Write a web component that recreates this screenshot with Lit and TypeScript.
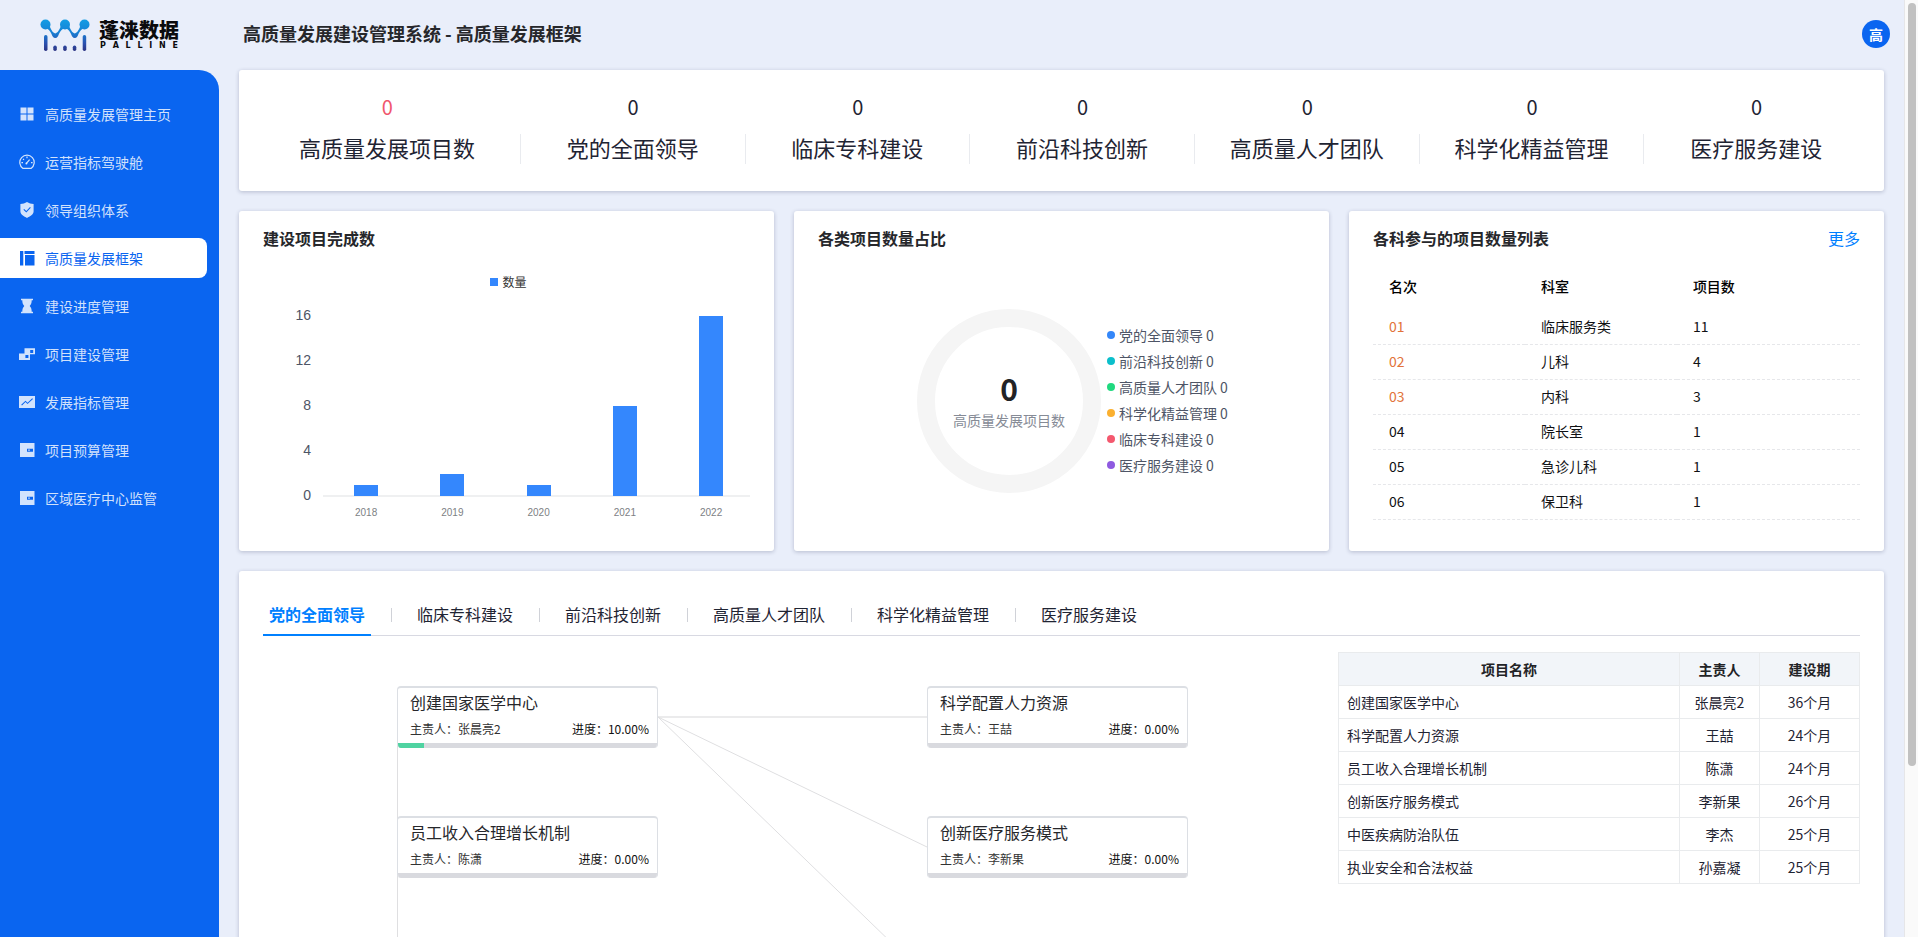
import { LitElement, html, css, svg } from "lit";
import { customElement, property, state } from "lit/decorators.js";
import { classMap } from "lit/directives/class-map.js";
import { styleMap } from "lit/directives/style-map.js";

const CATEGORIES = ["党的全面领导", "临床专科建设", "前沿科技创新", "高质量人才团队", "科学化精益管理", "医疗服务建设"];

const ICONS: Record<string, unknown> = {
  grid: svg`<path fill="currentColor" d="M1.5 1.5h6v6h-6zM8.5 1.5h6v6h-6zM1.5 8.5h6v6h-6zM8.5 8.5h6v6h-6z"/>`,
  gauge: svg`<path fill="none" stroke="currentColor" stroke-width="1.2" d="M4 14.4A7.2 7.2 0 1 1 12 14.4Z"/>
    <path fill="none" stroke="currentColor" stroke-width="1.2" d="M7.4 9.4 10.6 5.6M8 2.6v1.6M2.4 8.6h1.6M12 8.6h1.6M4 4.8l1 1"/>
    <circle cx="7.4" cy="9.4" r="1" fill="currentColor"/>`,
  shield: svg`<path fill="currentColor" fill-rule="evenodd" d="M8 0c2 1.300 4 1.900 6.600 2v7.500c0 3-3.600 4.700-6.600 6.500-3-1.800-6.600-3.500-6.600-6.500V2C4 1.900 6 1.300 8 0zM5.200 6.900 4.400 7.700 7.300 10.500 11.800 5.700 11 5 7.300 8.900z"/>`,
  frame: svg`<path fill="currentColor" d="M1 1h3.300v14.500H1zM5.500 1H15.500v3H5.500zM6 5h9.500v10.500H6z"/>`,
  hourglass: svg`<path fill="currentColor" d="M2 .7h12v1.600h-1.300c0 2.500-.5 4.200-2 5.700 1.500 1.500 2 3.200 2 5.700H14v1.600H2v-1.600h1.300c0-2.500.5-4.200 2-5.700-1.500-1.500-2-3.200-2-5.700H2z"/>`,
  blocks: svg`<path fill="currentColor" fill-rule="evenodd" d="M5.500 2.300H16V8.300H11V14H0V7.600h5.500zM11.200 4v3h3V4zM6.400 9v3h3V9z"/>`,
  trend: svg`<path fill="currentColor" fill-rule="evenodd" d="M0 2h16v12H0zM2.200 10.700l.8.800L6.500 8l2 2L14 4.900 13.200 4.200 8.600 8.700 6.500 6.700z"/>`,
  wallet: svg`<path fill="currentColor" fill-rule="evenodd" d="M1 1h14.500v14H1zM8 6.700v3h6v-3z"/><path fill="currentColor" d="M9.200 7.600h1.600v1.200H9.200z"/>`,
};

const MENU = [
  { icon: "grid", label: "高质量发展管理主页" },
  { icon: "gauge", label: "运营指标驾驶舱" },
  { icon: "shield", label: "领导组织体系" },
  { icon: "frame", label: "高质量发展框架", active: true },
  { icon: "hourglass", label: "建设进度管理" },
  { icon: "blocks", label: "项目建设管理" },
  { icon: "trend", label: "发展指标管理" },
  { icon: "wallet", label: "项目预算管理" },
  { icon: "wallet", label: "区域医疗中心监管" },
];

@customElement("side-menu")
class SideMenu extends LitElement {
  static styles = css`
    :host { display: flex; flex-direction: column; }
    .brand { display: flex; align-items: center; gap: 9px; height: 70px; padding: 0 0 6px 40px; box-sizing: border-box; }
    .mark { width: 50px; height: 34px; flex: none; margin-top: 6px; }
    .words { display: flex; flex-direction: column; width: 80px; margin-top: 5px; }
    .name { font-size: 20px; line-height: 22px; font-weight: 900; color: #0b0b0d; white-space: nowrap; }
    .latin { display: flex; justify-content: space-between; font: 700 8px/10px "DejaVu Sans", sans-serif; color: #0b0b0d; padding: 0 1px; }
    .menu { flex: 1; display: flex; flex-direction: column; gap: 8px; padding: 24px 12px 0 0; background: #0a65f0; border-radius: 0 20px 0 0; }
    .item { display: flex; align-items: center; gap: 10px; height: 40px; padding-left: 19px; border-radius: 0 8px 8px 0; color: rgba(255, 255, 255, 0.82); text-decoration: none; font-size: 14px; }
    .item.active { background: #fff; color: #0a65f0; }
    .icon { width: 16px; height: 16px; flex: none; }
  `;

  render() {
    return html`
      <div class="brand">
        <svg class="mark" viewBox="0 0 50 34" aria-hidden="true">
          <defs>
            <linearGradient id="g" gradientUnits="userSpaceOnUse" x1="0" y1="0" x2="0" y2="34">
              <stop offset="0" stop-color="#12a0e6" />
              <stop offset="0.4" stop-color="#1683d6" />
              <stop offset="0.75" stop-color="#2a4fae" />
              <stop offset="1" stop-color="#2c2f7c" />
            </linearGradient>
          </defs>
          <g fill="url(#g)">
            <circle cx="5.500" cy="6.500" r="5" />
            <circle cx="25" cy="6.500" r="5" />
            <circle cx="44.500" cy="6.500" r="5" />
            <path d="M7 10.500C10 12 11 15 12.500 18.200Q15.300 22 18 18.200C19.500 15 20.500 12 23.500 10.500L21 8C18.500 13 18 14.500 15.300 15.500 12.500 14.500 12 13 9.500 8z" />
            <path d="M26.500 10.500C29.500 12 30.500 15 32 18.200Q34.800 22 37.500 18.200C39 15 40 12 43 10.500L40.500 8C38 13 37.500 14.500 34.800 15.500 32 14.500 31.500 13 29 8z" />
            <rect x="4" y="17" width="3.500" height="16" rx="1.700" />
            <rect x="13.300" y="27.500" width="3.500" height="5.500" rx="1.700" />
            <rect x="23.200" y="27.500" width="3.500" height="5.500" rx="1.700" />
            <rect x="32.800" y="27.500" width="3.500" height="5.500" rx="1.700" />
            <rect x="42.700" y="17" width="3.500" height="16" rx="1.700" />
          </g>
        </svg>
        <div class="words">
          <span class="name">蓬涞数据</span>
          <span class="latin">${[..."PALLINE"].map((c) => html`<span>${c}</span>`)}</span>
        </div>
      </div>
      <nav class="menu" aria-label="主菜单">
        ${MENU.map(
          (m) => html`<a class=${classMap({ item: true, active: !!m.active })} href="#">
            <svg class="icon" viewBox="0 0 16 16" aria-hidden="true">${ICONS[m.icon]}</svg>
            <span>${m.label}</span>
          </a>`
        )}
      </nav>
    `;
  }
}

@customElement("stat-strip")
class StatStrip extends LitElement {
  static styles = css`
    :host { display: grid; grid-template-columns: 19fr repeat(6, 16fr); padding: 23px 15px 27px; color: #1f2433; text-align: center; }
    .stat { display: flex; flex-direction: column; gap: 13px; }
    .value { font-size: 20px; line-height: 28px; }
    .label { font-size: 22px; line-height: 26px; padding-bottom: 4px; border-right: 1px solid #e9ebef; white-space: nowrap; }
    .stat:first-child .value { color: #f0566d; }
    .stat:last-child .label { border-right-color: transparent; }
  `;

  render() {
    return ["高质量发展项目数", ...CATEGORIES].map(
      (label) => html`<div class="stat"><span class="value">0</span><span class="label">${label}</span></div>`
    );
  }
}

@customElement("bar-chart")
class BarChart extends LitElement {
  static styles = css`
    :host { display: block; margin-top: 22px; }
    .legend { display: flex; align-items: center; justify-content: center; gap: 4px; padding-left: 4px; font-size: 12px; line-height: 18px; color: #333; }
    .swatch { width: 8px; height: 8px; background: #3487fd; }
    .chart { display: grid; grid-template-columns: 48px minmax(0, 1fr); column-gap: 12px; margin-top: 14px; font-family: "Liberation Sans", Arial, sans-serif; }
    .scale { display: flex; flex-direction: column; justify-content: space-between; height: 200px; text-align: right; font-size: 14px; line-height: 20px; color: #4e5566; }
    .plot, .years { display: grid; grid-template-columns: repeat(5, 20.2%); }
    .plot { height: 180px; margin-top: 10px; border-bottom: 2px solid #eff0f1; }
    .slot { display: flex; align-items: flex-end; justify-content: center; }
    .bar { width: 24px; background: #3487fd; margin-bottom: -1px; }
    .years { grid-column: 2; text-align: center; font-size: 10px; line-height: 16px; color: #7d7f84; }
  `;

  private data = [
    { year: 2018, n: 1 },
    { year: 2019, n: 2 },
    { year: 2020, n: 1 },
    { year: 2021, n: 8 },
    { year: 2022, n: 16 },
  ];

  render() {
    return html`
      <div class="legend"><span class="swatch"></span><span>数量</span></div>
      <div class="chart">
        <div class="scale">${[16, 12, 8, 4, 0].map((v) => html`<span>${v}</span>`)}</div>
        <div class="plot">
          ${this.data.map(
            (d) => html`<div class="slot"><div class="bar" style=${styleMap({ height: `${(d.n / 16) * 100}%` })}></div></div>`
          )}
        </div>
        <div class="years">${this.data.map((d) => html`<span>${d.year}</span>`)}</div>
      </div>
    `;
  }
}

@customElement("share-chart")
class ShareChart extends LitElement {
  static styles = css`
    :host { display: flex; align-items: center; gap: 6px; margin-top: 58px; }
    .space-l { flex: 17; }
    .space-r { flex: 13; }
    .ring { width: 184px; height: 184px; box-sizing: border-box; border: 18px solid #f5f5f5; border-radius: 50%; display: flex; flex-direction: column; align-items: center; justify-content: center; gap: 4px; flex: none; }
    .total { font-size: 30px; line-height: 34px; font-weight: 700; color: #222326; }
    .caption { font-size: 14px; line-height: 22px; color: #868b96; white-space: nowrap; }
    .legend { list-style: none; margin: 0; padding: 0 0 3px; font-size: 14px; line-height: 26px; color: #4e5566; }
    .row { display: flex; align-items: center; gap: 4px; white-space: nowrap; }
    .dot { width: 8px; height: 8px; border-radius: 50%; flex: none; }
  `;

  private items = [
    { name: "党的全面领导", color: "#3487f9" },
    { name: "前沿科技创新", color: "#0bbfcb" },
    { name: "高质量人才团队", color: "#20d97f" },
    { name: "科学化精益管理", color: "#fbb02f" },
    { name: "临床专科建设", color: "#f4586e" },
    { name: "医疗服务建设", color: "#8f5ae0" },
  ];

  render() {
    return html`
      <span class="space-l"></span>
      <div class="ring"><span class="total">0</span><span class="caption">高质量发展项目数</span></div>
      <ul class="legend">
        ${this.items.map(
          (i) => html`<li class="row"><span class="dot" style=${styleMap({ background: i.color })}></span><span>${i.name} 0</span></li>`
        )}
      </ul>
      <span class="space-r"></span>
    `;
  }
}

@customElement("rank-table")
class RankTable extends LitElement {
  static styles = css`
    :host { display: block; margin-top: 14px; }
    .table { width: 100%; border-collapse: collapse; table-layout: fixed; font-size: 14px; line-height: 20px; color: #101114; text-align: left; }
    .third { width: 31.2%; }
    .table th { height: 44px; padding: 0 16px 2px; font-weight: 500; color: #000; box-sizing: border-box; }
    .table td { height: 35px; padding: 0 16px 1px; box-sizing: border-box; }
    .line { border-bottom: 1px dashed #e6e7ea; }
    .top { color: #e2733a; }
  `;

  private rows = [
    ["01", "临床服务类", 11],
    ["02", "儿科", 4],
    ["03", "内科", 3],
    ["04", "院长室", 1],
    ["05", "急诊儿科", 1],
    ["06", "保卫科", 1],
  ];

  render() {
    return html`<table class="table">
      <thead>
        <tr><th class="third" scope="col">名次</th><th class="third" scope="col">科室</th><th scope="col">项目数</th></tr>
      </thead>
      <tbody>
        ${this.rows.map(
          ([rank, dept, n], i) => html`<tr class="line"><td class=${classMap({ top: i < 3 })}>${rank}</td><td>${dept}</td><td>${n}</td></tr>`
        )}
      </tbody>
    </table>`;
  }
}

interface Project {
  name: string;
  owner: string;
  months: number;
}

const PROJECTS: Project[] = [
  { name: "创建国家医学中心", owner: "张晨亮2", months: 36 },
  { name: "科学配置人力资源", owner: "王喆", months: 24 },
  { name: "员工收入合理增长机制", owner: "陈潇", months: 24 },
  { name: "创新医疗服务模式", owner: "李新果", months: 26 },
  { name: "中医疾病防治队伍", owner: "李杰", months: 25 },
  { name: "执业安全和合法权益", owner: "孙嘉凝", months: 25 },
];

@customElement("project-graph")
class ProjectGraph extends LitElement {
  static styles = css`
    :host { display: block; position: relative; min-height: 460px; }
    .edges { position: absolute; left: 0; top: 0; width: 930px; height: 460px; fill: none; stroke: #dfdfe1; }
    .node { position: absolute; width: 261px; height: 62px; box-sizing: border-box; display: flex; flex-direction: column; border: 1px solid #dcdfe4; border-top-width: 2px; border-bottom: 0; border-radius: 4px; background: #fff; overflow: hidden; padding-top: 2px; }
    .title { font-size: 16px; line-height: 24px; color: #26272b; padding: 0 12px; }
    .meta { display: flex; justify-content: space-between; font-size: 12px; line-height: 18px; padding: 6px 8px 5px 12px; color: #333; }
    .progress { color: #111; }
    .track { flex: 1; background: #d9dadf; }
    .done { height: 100%; background: #4fd3a1; }
  `;

  private nodes = [
    { p: PROJECTS[0], x: 134, y: 34, done: 10 },
    { p: PROJECTS[1], x: 664, y: 34, done: 0 },
    { p: PROJECTS[2], x: 134, y: 164, done: 0 },
    { p: PROJECTS[3], x: 664, y: 164, done: 0 },
  ];

  render() {
    return html`
      <svg class="edges" viewBox="0 0 930 460" aria-hidden="true">
        <path d="M395 65H664" stroke-width="2" stroke="#ebebec" />
        <path d="M395 65 664 195M395 65 664 325M134.500 65V455" />
      </svg>
      ${this.nodes.map(
        (n) => html`<article class="node" style=${styleMap({ left: `${n.x}px`, top: `${n.y}px` })}>
          <span class="title">${n.p.name}</span>
          <div class="meta"><span>主责人：${n.p.owner}</span><span class="progress">进度：${n.done.toFixed(2)}%</span></div>
          <div class="track"><div class="done" style=${styleMap({ width: `${n.done}%` })}></div></div>
        </article>`
      )}
    `;
  }
}

@customElement("project-table")
class ProjectTable extends LitElement {
  static styles = css`
    :host { display: block; }
    .table { width: 100%; border-collapse: collapse; table-layout: fixed; font-size: 14px; line-height: 20px; color: #1f2433; text-align: center; }
    .table th, .table td { height: 33px; padding: 0 8px 1px; box-sizing: border-box; border: 1px solid #e9ebed; }
    .table th { background: #f2f5f9; color: #222326; font-weight: 700; }
    .table .name { text-align: left; }
    .owner-col { width: 80px; }
    .term-col { width: 100px; }
  `;

  render() {
    return html`<table class="table">
      <thead>
        <tr><th scope="col">项目名称</th><th class="owner-col" scope="col">主责人</th><th class="term-col" scope="col">建设期</th></tr>
      </thead>
      <tbody>
        ${PROJECTS.map((p) => html`<tr><td class="name">${p.name}</td><td>${p.owner}</td><td>${p.months}个月</td></tr>`)}
      </tbody>
    </table>`;
  }
}

@customElement("tab-bar")
class TabBar extends LitElement {
  static styles = css`
    :host { display: flex; align-items: flex-start; border-bottom: 1px solid #d8d9e2; height: 33px; }
    .tab { font: inherit; font-size: 16px; line-height: 24px; color: #1f2433; background: none; border: 0; border-bottom: 2px solid transparent; padding: 0 6px 8px; cursor: pointer; white-space: nowrap; }
    .tab.active { font-weight: 700; color: #0080ff; border-bottom-color: #0080ff; }
    .sep { width: 1px; height: 14px; margin: 6px 19px 0 20px; background: #d0d2d8; }
  `;

  @property({ type: Array }) tabs: string[] = [];
  @state() private current = 0;

  render() {
    return this.tabs.map(
      (t, i) => html`${i ? html`<span class="sep"></span>` : ""}<button
          type="button"
          class=${classMap({ tab: true, active: i === this.current })}
          aria-pressed=${i === this.current ? "true" : "false"}
          @click=${() => (this.current = i)}
        >${t}</button>`
    );
  }
}

@customElement("app-root")
class AppRoot extends LitElement {
  static styles = css`
    :host { display: grid; grid-template-columns: 219px minmax(0, 1fr) 14px; height: 100vh; overflow: hidden; background: #e9eefa; font-family: "Noto Sans CJK SC", "Noto Sans", sans-serif; }
    .page { overflow: hidden; }
    .top { display: flex; align-items: center; justify-content: space-between; height: 70px; box-sizing: border-box; padding: 0 14px 2px 24px; }
    .heading { margin: 0; padding-bottom: 2px; font-size: 18px; line-height: 26px; font-weight: 700; color: #26272b; }
    .avatar { width: 28px; height: 28px; padding: 0; border: 0; border-radius: 50%; background: #0a65f0; color: #fff; font: inherit; font-size: 14px; line-height: 26px; font-weight: 700; }
    .content { display: flex; flex-direction: column; gap: 20px; padding: 0 20px 20px; }
    .card { background: #fff; border-radius: 3px; box-shadow: 0 1px 4px rgba(20, 30, 70, 0.24); }
    .trio { display: grid; grid-template-columns: repeat(3, minmax(0, 1fr)); gap: 20px; }
    .panel { padding: 15px 24px 30px; }
    .bar { display: flex; justify-content: space-between; padding-bottom: 1px; font-size: 16px; line-height: 24px; }
    .title { margin: 0; font-size: 16px; font-weight: 700; color: #26272b; }
    .more { color: #0080ff; text-decoration: none; }
    .projects { padding: 31px 24px; }
    .split { display: grid; grid-template-columns: minmax(0, 1075fr) minmax(0, 522fr); margin-top: 16px; }
    .rail { box-sizing: border-box; padding: 3px 2px 3px 3px; background: #fafafa; border-left: 1px solid #e6e6e8; }
    .thumb { height: 82%; border-radius: 4px; background: #c1c1c1; }
  `;

  render() {
    return html`
      <side-menu></side-menu>
      <main class="page">
        <header class="top">
          <h1 class="heading">高质量发展建设管理系统 - 高质量发展框架</h1>
          <button class="avatar" type="button">高</button>
        </header>
        <div class="content">
          <stat-strip class="card"></stat-strip>
          <div class="trio">
            <section class="card panel">
              <div class="bar"><h2 class="title">建设项目完成数</h2></div>
              <bar-chart></bar-chart>
            </section>
            <section class="card panel">
              <div class="bar"><h2 class="title">各类项目数量占比</h2></div>
              <share-chart></share-chart>
            </section>
            <section class="card panel">
              <div class="bar"><h2 class="title">各科参与的项目数量列表</h2><a class="more" href="#">更多</a></div>
              <rank-table></rank-table>
            </section>
          </div>
          <section class="card projects">
            <tab-bar .tabs=${CATEGORIES}></tab-bar>
            <div class="split">
              <project-graph></project-graph>
              <project-table></project-table>
            </div>
          </section>
        </div>
      </main>
      <div class="rail" aria-hidden="true"><div class="thumb"></div></div>
    `;
  }
}
